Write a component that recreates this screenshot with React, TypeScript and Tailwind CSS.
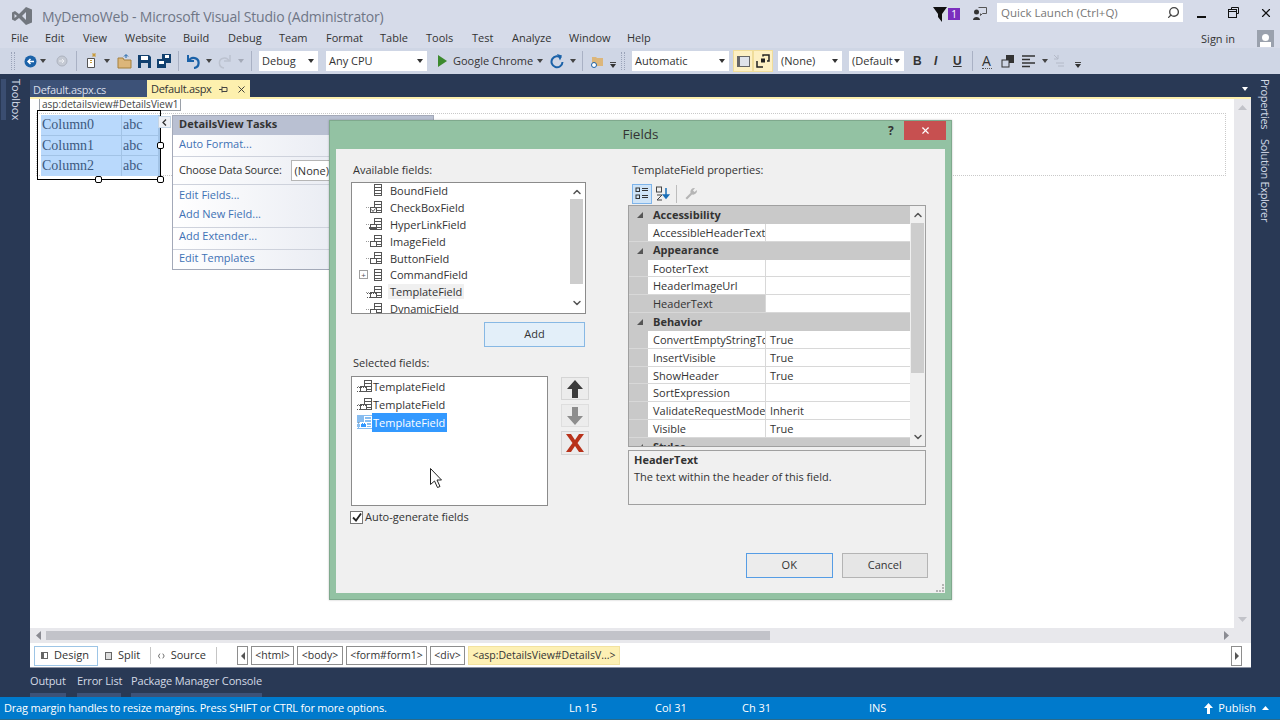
import { ChevronUp, ChevronDown, X, Search } from "lucide-react";

const menus = [
  ["File", "w-[34px]"],
  ["Edit", "w-[38px]"],
  ["View", "w-[42px]"],
  ["Website", "w-[58px]"],
  ["Build", "w-[45px]"],
  ["Debug", "w-[51px]"],
  ["Team", "w-[47px]"],
  ["Format", "w-[54px]"],
  ["Table", "w-[46px]"],
  ["Tools", "w-[46px]"],
  ["Test", "w-[40px]"],
  ["Analyze", "w-[57px]"],
  ["Window", "w-[58px]"],
  ["Help", "w-[30px]"],
];

const available = [
  ["BoundField", "plain", false],
  ["CheckBoxField", "check", false],
  ["HyperLinkField", "link", false],
  ["ImageField", "image", false],
  ["ButtonField", "button", false],
  ["CommandField", "plain", true],
  ["TemplateField", "template", false],
  ["DynamicField", "image", false],
] as const;

const props: { name: string; value?: string; group?: boolean; active?: boolean }[] = [
  { name: "Accessibility", group: true },
  { name: "AccessibleHeaderText" },
  { name: "Appearance", group: true },
  { name: "FooterText" },
  { name: "HeaderImageUrl" },
  { name: "HeaderText", active: true },
  { name: "Behavior", group: true },
  { name: "ConvertEmptyStringTc", value: "True" },
  { name: "InsertVisible", value: "True" },
  { name: "ShowHeader", value: "True" },
  { name: "SortExpression" },
  { name: "ValidateRequestMode", value: "Inherit" },
  { name: "Visible", value: "True" },
  { name: "Styles", group: true },
];

function Caret({ className = "text-[#333]" }: { className?: string }) {
  return (
    <svg width="6" height="4" viewBox="0 0 6 4" className={`shrink-0 ${className}`}>
      <path d="M0 0h6L3 4z" fill="currentColor" />
    </svg>
  );
}

function Combo({ label, width }: { label: string; width: string }) {
  return (
    <div className={`h-[20px] bg-white flex items-center justify-between pl-[3px] pr-[4px] text-[11px] text-[#333] shrink-0 whitespace-nowrap ${width}`}>
      <span>{label}</span>
      <Caret />
    </div>
  );
}

function Sep({ ml }: { ml: string }) {
  return <div className={`w-px h-[20px] bg-[#a9b1c4] shrink-0 ${ml}`} />;
}

function Grip({ ml }: { ml: string }) {
  return <div className={`w-[4px] h-[18px] border-x border-dotted border-[#9aa3b8] shrink-0 ${ml}`} />;
}

function Overflow({ ml }: { ml: string }) {
  return (
    <div className={`flex flex-col items-center gap-[1px] mt-[8px] shrink-0 ${ml}`}>
      <div className="w-[6px] h-px bg-[#444]" />
      <Caret />
    </div>
  );
}

function FieldIcon({ kind, light = false }: { kind: string; light?: boolean }) {
  const c = light ? "#ffffff" : "#555";
  return (
    <svg width="20" height="14" viewBox="0 0 20 14" className="shrink-0" fill="none" stroke={c}>
      <rect x="8.5" y="1.5" width="7" height="11" />
      <path d="M8.5 4.5h7M8.5 7.5h7M8.5 10.5h7" />
      {kind !== "plain" && <rect x="4.5" y="7.5" width="6" height="5" fill={light ? "#3399ff" : "#fff"} />}
      {kind === "link" && <path d="M3 11h8" strokeWidth="2" />}
      {kind === "check" && <path d="M5.500 9.500l1.500 2 2.500-3" />}
      {kind === "template" && <path d="M1 8.5h9M1 12.5h9" strokeDasharray="1 1" />}
      {kind !== "plain" && <path d="M0 7.5h4" strokeDasharray="1 1" stroke="#999" />}
    </svg>
  );
}

function Handle({ className }: { className: string }) {
  return <div className={`absolute w-[7px] h-[7px] rounded-[2px] bg-white border border-black ${className}`} />;
}

function Crumb({ label, width, active = false }: { label: string; width: string; active?: boolean }) {
  return (
    <div
      className={`h-[19px] flex items-center justify-center text-[10.500px] text-[#333] shrink-0 border whitespace-nowrap ${width} ${
        active ? "bg-[#fdf0b4] border-[#f2e2a0]" : "bg-white border-[#8e8e8e]"
      }`}
    >
      {label}
    </div>
  );
}

function FieldsDialog() {
  return (
    <div className="absolute left-[329px] top-[120px] w-[623px] h-[480px] bg-[#93c2a3] border border-[#7fa98d] flex flex-col text-[#333] shadow-[0_0_2px_rgba(0,0,0,0.25)]">
      <div className="h-[28px] pb-[2px] relative flex items-center justify-center text-[13.500px] shrink-0">
        <span>Fields</span>
        <span className="absolute left-[558px] top-[1px] text-[12px] font-bold">?</span>
        <div className="absolute left-[574px] top-0 w-[42px] h-[19px] bg-[#c75050] flex items-center justify-center">
          <X size={11} strokeWidth={2.500} className="text-white" />
        </div>
      </div>
      <div className="mx-[6px] mb-[6px] flex-1 bg-[#f0f0f0] relative flex pl-[15px] pt-[14px] text-[11px]">
        {/* left column */}
        <div className="w-[279px] shrink-0">
          <div className="h-[16px] pl-[2px] leading-[14px]">Available fields:</div>
          <div className="mt-[3px] w-[235px] h-[132px] bg-white border border-[#8b8b8b] flex overflow-hidden">
            <div className="flex-1 overflow-hidden -mt-[1px]">
              {available.map(([name, kind, plus]) => (
                <div key={name} className="h-[16.9px] flex items-center">
                  <div className="w-[7px] ml-[7px] shrink-0">
                    {plus && (
                      <div className="w-[9px] h-[9px] border border-[#a0a0a0] text-[8px] leading-[7px] text-center text-[#555]">+</div>
                    )}
                  </div>
                  <FieldIcon kind={kind} />
                  <span className={`ml-[2px] px-[2px] leading-[15px] ${kind === "template" ? "bg-[#f0f0f0]" : ""}`}>{name}</span>
                </div>
              ))}
            </div>
            <div className="w-[13px] mr-[2px] shrink-0 flex flex-col items-center">
              <ChevronUp size={12} strokeWidth={3} className="text-[#555] mt-[2px] h-[14px]" />
              <div className="w-full h-[85px] bg-[#cdcdcd]" />
              <ChevronDown size={12} strokeWidth={3} className="text-[#555] mt-[13px]" />
            </div>
          </div>
          <div className="mt-[8px] ml-[133px] w-[101px] h-[25px] bg-[#e3eff9] border border-[#87b8e4] flex items-center justify-center">
            Add
          </div>
          <div className="mt-[9px] h-[16px] pl-[2px] leading-[14px]">Selected fields:</div>
          <div className="mt-[4px] flex">
            <div className="w-[197px] h-[130px] bg-white border border-[#8b8b8b] pl-[5px]">
              {["a", "b", "c"].map((k) => (
                <div key={k} className="h-[18px] flex items-center">
                  <div className={`w-[15px] overflow-hidden shrink-0 ${k === "c" ? "bg-[#88bdf0]" : ""}`}>
                    <div className="-ml-[1px]">
                      <FieldIcon kind="template" light={k === "c"} />
                    </div>
                  </div>
                  <span className={`leading-[19px] pl-[1px] pr-[2px] ${k === "c" ? "bg-[#3399ff] text-white" : ""}`}>TemplateField</span>
                </div>
              ))}
            </div>
            <div className="ml-[13px] flex flex-col mt-[1px]">
              <div className="w-[28px] h-[23px] bg-[#ececec] border border-[#d5d5d5] flex items-center justify-center">
                <svg width="16" height="18" viewBox="0 0 16 18"><path d="M8 0L16 9h-5v9H5V9H0z" fill="#3c3c3c" /></svg>
              </div>
              <div className="mt-[4px] w-[28px] h-[23px] bg-[#ececec] border border-[#dedede] flex items-center justify-center">
                <svg width="16" height="18" viewBox="0 0 16 18"><path d="M8 18L0 9h5V0h6v9h5z" fill="#8d8d8d" /></svg>
              </div>
              <div className="mt-[4px] w-[28px] h-[24px] bg-[#ececec] border border-[#d5d5d5] flex items-center justify-center">
                <svg width="22" height="20" viewBox="0 0 22 20"><path d="M2 1h5l4 6 4-6h5l-6.500 9L20 19h-5l-4-6-4 6H2l6.500-9z" fill="#b8321a" /></svg>
              </div>
            </div>
          </div>
          <div className="mt-[3px] -ml-[1px] flex items-center">
            <div className="w-[13px] h-[13px] bg-white border border-[#777] flex items-center justify-center">
              <svg width="10" height="9" viewBox="0 0 10 9"><path d="M1 4.500l3 3 5-7" fill="none" stroke="#222" strokeWidth="1.800" /></svg>
            </div>
            <span className="ml-[2px]">Auto-generate fields</span>
          </div>
        </div>
        {/* right column */}
        <div className="w-[298px] shrink-0">
          <div className="h-[16px] pl-[2px] leading-[14px]">TemplateField properties:</div>
          <div className="h-[21px] mt-[4px] pl-[2px] flex items-center">
            <div className="w-[20px] h-[20px] bg-[#cfe4f7] border border-[#7eb4ea] flex items-center justify-center">
              <svg width="14" height="13" viewBox="0 0 14 13" fill="none" stroke="#333">
                <rect x="1" y="1" width="3.500" height="3.500" />
                <rect x="1" y="8" width="3.500" height="3.500" />
                <path d="M7 1.500h6M7 3.500h6M7 8.500h6M7 10.500h6" />
              </svg>
            </div>
            <svg width="16" height="15" viewBox="0 0 16 15" className="ml-[3px]" fill="none">
              <rect x="1.500" y="1" width="5" height="5" stroke="#444" />
              <path d="M2 9h5L2 14h5" stroke="#444" />
              <path d="M11 2v9M8.500 9l2.500 3 2.500-3z" stroke="#1a6fb8" strokeWidth="1.500" />
            </svg>
            <div className="ml-[5px] w-px h-[18px] bg-[#bdbdbd]" />
            <svg width="14" height="14" viewBox="0 0 14 14" className="ml-[7px]">
              <path d="M13 3l-2.500 2L9 3.500 11 1a4 4 0 00-4.500 5L1.500 11l1.500 1.500L8 7.500A4 4 0 0013 3z" fill="#b5b5b5" />
            </svg>
          </div>
          <div className="mt-[1px] -ml-[2px] w-[298px] h-[242px] bg-white border border-[#a0a0a0] flex overflow-hidden">
            <div className="w-[281px] shrink-0">
              {props.map((p) =>
                p.group ? (
                  <div key={p.name} className="h-[17.85px] bg-[#c9c9c9] flex items-center font-bold">
                    <svg width="6" height="6" viewBox="0 0 6 6" className="ml-[8px]"><path d="M6 0v6H0z" fill="#555" /></svg>
                    <span className="ml-[10px]">{p.name}</span>
                  </div>
                ) : (
                  <div key={p.name} className="h-[17.85px] flex border-b border-[#d8d8d8]">
                    <div className="w-[19px] bg-[#c9c9c9] shrink-0" />
                    <div className={`w-[118px] shrink-0 pl-[5px] overflow-hidden whitespace-nowrap leading-[17px] border-r border-[#d8d8d8] ${p.active ? "bg-[#c9c9c9]" : ""}`}>
                      {p.name}
                    </div>
                    <div className="flex-1 pl-[4px] leading-[17px]">{p.value}</div>
                  </div>
                ),
              )}
            </div>
            <div className="flex-1 flex flex-col items-center bg-[#f0f0f0]">
              <ChevronUp size={12} strokeWidth={3} className="text-[#555] mt-[3px] h-[12px]" />
              <div className="w-[13px] mt-[2px] h-[150px] bg-[#cdcdcd]" />
              <ChevronDown size={12} strokeWidth={3} className="text-[#555] mt-[58px]" />
            </div>
          </div>
          <div className="mt-[3px] -ml-[2px] w-[298px] h-[55px] border border-[#a0a0a0] pl-[5px] pt-[1px]">
            <div className="font-bold leading-[16px]">HeaderText</div>
            <div className="mt-[1px] leading-[16px]">The text within the header of this field.</div>
          </div>
          <div className="mt-[48px] flex ml-[116px]">
            <div className="w-[88px] h-[25px] bg-[#ececec] border border-[#569de5] flex items-center justify-center">OK</div>
            <div className="ml-[9px] w-[88px] h-[25px] bg-[#e6e6e6] border border-[#b4b4b4] flex items-center justify-center">Cancel</div>
          </div>
        </div>
        <div className="absolute right-[1px] bottom-[1px] w-[8px] h-[8px] border-r-2 border-b-2 border-dotted border-[#b5b5b5]" />
      </div>
    </div>
  );
}

export default function App() {
  return (
    <div className="w-[1280px] h-[720px] relative overflow-hidden flex flex-col bg-[#d6dbe9] text-[#333] font-['Open_Sans','Liberation_Sans',sans-serif]">
      {/* title bar */}
      <div className="h-[28px] flex items-center shrink-0">
        <svg width="20" height="18" viewBox="0 0 20 18" className="ml-[12px] mt-[4px]">
          <path d="M14 0l6 2.500v13L14 18 7 11l-4 3-3-1.500v-7L3 4l4 3zM14 5L10 9l4 4zM2.500 7v4L5 9z" fill="#72777f" />
        </svg>
        <div className="ml-[10px] mt-[4px] text-[14px] tracking-[-0.2px] text-[#6f7686]">MyDemoWeb - Microsoft Visual Studio (Administrator)</div>
        <div className="ml-auto flex items-center">
          <svg width="14" height="15" viewBox="0 0 14 15"><path d="M0 0h14L9 7v8L5 10V7z" fill="#111" /></svg>
          <div className="ml-[1px] w-[12px] h-[12px] bg-[#7b2fbe] text-white text-[10px] leading-[12px] text-center">1</div>
          <svg width="16" height="16" viewBox="0 0 16 16" className="ml-[12px]">
            <circle cx="4.500" cy="6" r="2.500" fill="#333" />
            <path d="M1 14c0-4 7-4 7 0z" fill="#333" />
            <path d="M6.500 1.500h8v6h-4l-2 2v-2" fill="none" stroke="#555" />
          </svg>
          <div className="ml-[9px] mb-[3px] w-[186px] h-[19px] bg-white flex items-center justify-between pl-[4px] pr-[3px] text-[11.500px] text-[#777]">
            <span>Quick Launch (Ctrl+Q)</span>
            <Search size={13} strokeWidth={2.500} className="-scale-x-100 text-[#444]" />
          </div>
          <div className="ml-[14px] w-[9px] h-[2px] bg-[#111] mt-[6px]" />
          <svg width="11" height="11" viewBox="0 0 11 11" className="ml-[22px] mb-[3px]" fill="none" stroke="#111">
            <path d="M3.500 2.500v-2h7v6h-2" />
            <rect x="0.500" y="2.500" width="8" height="8" />
            <path d="M.5 4.500h8" />
          </svg>
          <X size={14} strokeWidth={2} className="ml-[20px] mr-[7px] mb-[3px] text-[#111]" />
        </div>
      </div>
      {/* menu */}
      <div className="h-[20px] flex items-center pl-[11px] text-[11px] text-[#333] shrink-0">
        {menus.map(([label, w]) => (
          <div key={label} className={`mt-[1px] ${w}`}>{label}</div>
        ))}
        <div className="ml-auto mt-[2px]">Sign in</div>
        <div className="ml-[22px] mr-[6px] w-[17px] h-[17px] bg-[#9aa1ad] flex flex-col items-center justify-end overflow-hidden">
          <div className="w-[7px] h-[7px] rounded-full bg-white mb-[1px]" />
          <div className="w-[11px] h-[5px] bg-white" />
        </div>
      </div>
      {/* toolbar */}
      <div className="h-[26px] flex items-center pl-[11px] shrink-0 bg-[#cfd6e5]">
        <Grip ml="ml-0" />
        <svg width="13" height="13" viewBox="0 0 13 13" className="ml-[9px]">
          <circle cx="6.500" cy="6.500" r="6" fill="#1b62a8" />
          <path d="M10 6.500H4M6.500 4L4 6.500 6.500 9" stroke="#fff" strokeWidth="1.500" fill="none" />
        </svg>
        <Caret className="text-[#444] ml-[3px]" />
        <svg width="12" height="12" viewBox="0 0 12 12" className="ml-[10px]">
          <circle cx="6" cy="6" r="5" fill="#c5cad4" stroke="#adb3bf" />
          <path d="M3 6h5M6 4l2 2-2 2" stroke="#eef0f4" fill="none" />
        </svg>
        <Sep ml="ml-[8px]" />
        <svg width="16" height="16" viewBox="0 0 16 16" className="ml-[6px]" fill="none">
          <path d="M4.500 5.500h7v9h-7z" fill="#fff" stroke="#555" />
          <path d="M7 7.500h2M7 9.500h2" stroke="#c89b3c" />
          <path d="M11 0v4M9 2h4M9.500 .5l3 3M12.500 .5l-3 3" stroke="#c89b3c" />
        </svg>
        <Caret className="text-[#444] ml-[5px]" />
        <svg width="15" height="15" viewBox="0 0 15 15" className="ml-[7px]">
          <path d="M1 4h5l1 2h7v8H1z" fill="#dcb67a" stroke="#a5803d" />
          <path d="M9 4V1M7 2.500L9 .5l2 2" stroke="#1b62a8" fill="none" />
        </svg>
        <svg width="13" height="13" viewBox="0 0 13 13" className="ml-[6px]">
          <path d="M0 0h11l2 2v11H0z" fill="#11406f" />
          <rect x="3" y="1" width="7" height="4" fill="#fff" />
          <rect x="3" y="8" width="7" height="5" fill="#c9d3e2" />
        </svg>
        <svg width="14" height="14" viewBox="0 0 14 14" className="ml-[6px]">
          <path d="M5 0h9v9H9v5H0V5h5z" fill="#11406f" />
          <rect x="8" y="1" width="4" height="3" fill="#fff" />
          <rect x="2" y="7" width="5" height="3" fill="#fff" />
        </svg>
        <Sep ml="ml-[7px]" />
        <svg width="14" height="15" viewBox="0 0 14 15" className="ml-[7px]" fill="none">
          <path d="M2 1v6h6" stroke="#1b62a8" strokeWidth="2" />
          <path d="M3 7a5 5 0 115 7" stroke="#1b62a8" strokeWidth="2.200" />
        </svg>
        <Caret className="text-[#444] ml-[6px]" />
        <svg width="14" height="15" viewBox="0 0 14 15" className="ml-[6px]" fill="none">
          <path d="M12 1v6H6" stroke="#bcc2cf" strokeWidth="1.500" />
          <path d="M11 7a5 5 0 10-5 7" stroke="#bcc2cf" strokeWidth="1.500" />
        </svg>
        <Caret className="text-[#a4aab8] ml-[6px]" />
        <Sep ml="ml-[7px]" />
        <Combo label="Debug" width="w-[59px] ml-[7px]" />
        <Combo label="Any CPU" width="w-[101px] ml-[8px]" />
        <svg width="9" height="12" viewBox="0 0 9 12" className="ml-[11px]"><path d="M0 0l9 6-9 6z" fill="#3c8a2e" /></svg>
        <div className="ml-[6px] w-[80px] text-[11px] whitespace-nowrap">Google Chrome</div>
        <Caret className="text-[#444] ml-[4px]" />
        <svg width="14" height="15" viewBox="0 0 14 15" className="ml-[7px]" fill="none">
          <path d="M11 4a5.500 5.500 0 10 1.500 4" stroke="#1b62a8" strokeWidth="2" />
          <path d="M7 0l5 1.500-2 5z" fill="#1b62a8" />
        </svg>
        <Caret className="text-[#444] ml-[6px]" />
        <Sep ml="ml-[6px]" />
        <svg width="15" height="15" viewBox="0 0 15 15" className="ml-[7px]">
          <path d="M2 3h4l1 1h6v8H2z" fill="#dcb67a" />
          <circle cx="4" cy="11" r="2.500" fill="#fff" stroke="#1b62a8" />
        </svg>
        <Overflow ml="ml-[5px]" />
        <Grip ml="ml-[5px]" />
        <Combo label="Automatic" width="w-[97px] ml-[7px]" />
        <div className="ml-[4px] w-[20px] h-[22px] bg-[#fdf0c3] border border-[#f0dd9a] flex items-center justify-center">
          <div className="w-[13px] h-[11px] border border-[#666] border-l-[3px] bg-[#e0e3ea]" />
        </div>
        <div className="w-[20px] h-[22px] bg-[#fdf0c3] border border-[#f0dd9a] flex items-center justify-center">
          <svg width="14" height="14" viewBox="0 0 14 14" fill="none" stroke="#222" strokeWidth="1.500">
            <path d="M7 2.500V1h6v6h-2" />
            <rect x="5" y="4.500" width="4" height="4" fill="#222" stroke="none" />
            <path d="M1 7v6h6" />
          </svg>
        </div>
        <Combo label="(None)" width="w-[64px] ml-[5px]" />
        <Combo label="(Default" width="w-[55px] ml-[7px]" />
        <div className="ml-[9px] w-[8px] text-[12px] font-bold text-[#333] font-['Liberation_Sans',sans-serif]">B</div>
        <div className="ml-[13px] w-[8px] text-[12px] font-bold italic text-[#333] font-['Liberation_Sans',sans-serif]">I</div>
        <div className="ml-[11px] w-[10px] text-[12px] font-bold underline text-[#333] font-['Liberation_Sans',sans-serif]">U</div>
        <Sep ml="ml-[9px]" />
        <div className="ml-[9px] w-[10px] text-[14px] leading-[14px] text-[#333] border-b border-dotted border-[#555]">A</div>
        <svg width="13" height="13" viewBox="0 0 13 13" className="ml-[9px]">
          <rect x="5" y="0" width="8" height="8" fill="#333" />
          <rect x="1" y="5" width="7" height="7" fill="#cfd6e5" stroke="#333" />
        </svg>
        <svg width="13" height="13" viewBox="0 0 13 13" className="ml-[8px]" stroke="#333" strokeWidth="1.500">
          <path d="M0 1h13M0 4.500h8M0 8h13M0 11.500h8" />
        </svg>
        <Caret className="text-[#444] ml-[7px]" />
        <svg width="12" height="14" viewBox="0 0 12 14" className="ml-[5px]" fill="none" stroke="#b4bac8">
          <path d="M1 1l4 4M1 5h4V1M3 9h8M5 12h6" />
        </svg>
        <Overflow ml="ml-[10px]" />
      </div>
      {/* main */}
      <div className="flex-1 min-h-0 flex bg-[#293955]">
        <div className="w-[30px] shrink-0 pt-[5px] flex">
          <div className="w-[5px] h-[41px] bg-[#3a4d70] ml-[1px]" />
          <div className="ml-[3px] text-[11px] text-[#d3d9e6] [writing-mode:vertical-rl] leading-[14px]">Toolbox</div>
        </div>
        <div className="w-[1221px] shrink-0 flex flex-col">
          <div className="h-[24px] shrink-0 pt-[6px] flex items-stretch text-[11px] tracking-[-0.3px]">
            <div className="w-[117px] bg-[#3d5278] text-[#d8deea] pl-[3px] leading-[19px]">Default.aspx.cs</div>
            <div className="w-[103px] bg-[#fdf0ae] text-[#333] pl-[4px] flex items-center">
              <span className="w-[68px]">Default.aspx</span>
              <svg width="9" height="9" viewBox="0 0 9 9" fill="none" stroke="#444"><path d="M0 4.500h3M3 1.500v6M3 2.500h5M3 6.500h5M8 2.500v4" /></svg>
              <X size={11} strokeWidth={2} className="ml-[8px]" />
            </div>
            <div className="ml-auto mr-[3px] flex items-center">
              <Caret className="text-white" />
            </div>
          </div>
          <div className="flex-1 min-h-0 bg-white border-t-2 border-[#fdf0ae] flex flex-col -mt-[1px]">
            <div className="flex-1 min-h-0 flex">
              <div className="flex-1 relative overflow-hidden">
                <div className="absolute left-[6px] top-[14px] w-[1190px] h-[63px] border border-dotted border-[#c9c9c9]" />
                <div className="absolute left-[9px] -top-[1px] w-[142px] h-[13px] bg-white border-x border-b border-[#9aa0a8] text-[10px] leading-[13px] pl-[2px] whitespace-nowrap text-[#444]">
                  asp:detailsview#DetailsView1
                </div>
                <div className="absolute left-[7px] top-[11px] w-[124px] h-[70px] border border-black pl-[3px] pt-[4px]">
                  <div className="grid grid-cols-[80px_36px] gap-[1px] bg-[#a2c3e6] font-['Liberation_Serif',serif] text-[14px] text-[#3d5a80]">
                    {["Column0", "Column1", "Column2"].map((c) => (
                      <div key={c} className="contents">
                        <div className="bg-[#b9d9fc] h-[19.500px] leading-[19px] pl-[1px]">{c}</div>
                        <div className="bg-[#b9d9fc] h-[19.500px] leading-[19px] pl-[1px]">abc</div>
                      </div>
                    ))}
                  </div>
                </div>
                <Handle className="left-[127px] top-[43px]" />
                <Handle className="left-[65px] top-[77px]" />
                <Handle className="left-[127px] top-[77px]" />
                <div className="absolute left-[128px] top-[17px] w-[13px] h-[12px] bg-[#eef0f5] border border-[#c5d5e5] flex items-center justify-center">
                  <svg width="5" height="7" viewBox="0 0 5 7" fill="none" stroke="#333" strokeWidth="1.300"><path d="M4 .5L1 3.500l3 3" /></svg>
                </div>
                <div className="absolute left-[142px] top-[16px] w-[262px] h-[155px] border border-[#a3a9b8] bg-gradient-to-r from-white to-[#dde1ec] text-[11px]">
                  <div className="h-[19px] bg-[#b9c0d2] pl-[6px] leading-[15px] font-bold text-[#333]">DetailsView Tasks</div>
                  <div className="h-[22px] pl-[6px] leading-[18px] text-[#3f72b5] border-b border-[#ced2dc]">Auto Format...</div>
                  <div className="h-[28px] pl-[6px] flex items-center border-b border-[#ced2dc]">
                    <span className="tracking-[-0.2px]">Choose Data Source:</span>
                    <div className="ml-[9px] w-[120px] h-[21px] bg-white border border-[#b5b5b5] pl-[3px] leading-[19px]">(None)</div>
                  </div>
                  <div className="h-[21px] pl-[6px] leading-[17px] text-[#3f72b5] mt-[1px]">Edit Fields...</div>
                  <div className="h-[21px] pl-[6px] leading-[14px] text-[#3f72b5] border-b border-[#ced2dc]">Add New Field...</div>
                  <div className="h-[22px] pl-[6px] leading-[16px] text-[#3f72b5] border-b border-[#ced2dc]">Add Extender...</div>
                  <div className="h-[21px] pl-[6px] leading-[16px] text-[#3f72b5]">Edit Templates</div>
                </div>
              </div>
              <div className="w-[17px] shrink-0 bg-[#e8e8ec] flex flex-col items-center justify-between py-[6px]">
                <svg width="9" height="5" viewBox="0 0 9 5"><path d="M4.500 0L9 5H0z" fill="#c2c3c9" /></svg>
                <svg width="9" height="5" viewBox="0 0 9 5"><path d="M4.500 5L9 0H0z" fill="#c2c3c9" /></svg>
              </div>
            </div>
            <div className="h-[15px] shrink-0 bg-[#e8e8ec] flex items-center pl-[6px] pr-[22px]">
              <svg width="5" height="9" viewBox="0 0 5 9"><path d="M0 4.500L5 0v9z" fill="#8a8b92" /></svg>
              <div className="ml-[5px] w-[724px] h-[9px] bg-[#c2c3c9]" />
              <svg width="5" height="9" viewBox="0 0 5 9" className="ml-auto"><path d="M5 4.500L0 0v9z" fill="#8a8b92" /></svg>
            </div>
            <div className="h-[25px] pt-[1px] shrink-0 flex items-center pl-[4px] text-[11px] border-b border-[#8c93a3]">
              <div className="w-[64px] h-[20px] border border-[#9dc5e6] flex items-center pl-[6px]">
                <div className="w-[7px] h-[7px] border border-[#666] border-l-[3px]" />
                <span className="ml-[6px]">Design</span>
              </div>
              <div className="ml-[7px] w-[36px] flex items-center">
                <div className="w-[7px] h-[8px] border border-[#666] bg-[#ddd]" />
                <span className="ml-[6px]">Split</span>
              </div>
              <div className="ml-[9px] w-px h-[17px] bg-[#c5c5c5]" />
              <div className="ml-[7px] w-[48px] flex items-center">
                <svg width="7" height="6" viewBox="0 0 7 6" fill="none" stroke="#666"><path d="M2 .5L.5 3 2 5.500M5 .5L6.500 3 5 5.500" /></svg>
                <span className="ml-[6px]">Source</span>
              </div>
              <div className="ml-[10px] w-px h-[17px] bg-[#c5c5c5]" />
              <div className="ml-[20px] w-[11px] h-[19px] border border-[#8e8e8e] flex items-center justify-center">
                <svg width="4" height="8" viewBox="0 0 4 8"><path d="M0 4l4-4v8z" fill="#555" /></svg>
              </div>
              <div className="ml-[3px] flex gap-[3px]">
                <Crumb label="<html>" width="w-[43px]" />
                <Crumb label="<body>" width="w-[46px]" />
                <Crumb label="<form#form1>" width="w-[81px]" />
                <Crumb label="<div>" width="w-[35px]" />
                <Crumb label="<asp:DetailsView#DetailsV...>" width="w-[152px]" active />
              </div>
              <div className="ml-auto mr-[9px] w-[11px] h-[20px] border border-[#8e8e8e] flex items-center justify-center">
                <svg width="4" height="8" viewBox="0 0 4 8"><path d="M4 4L0 0v8z" fill="#555" /></svg>
              </div>
            </div>
          </div>
          <div className="h-[29px] shrink-0 flex pt-[5px] text-[11px] tracking-[-0.15px] text-[#d3d9e6]">
            <div className="w-[36px] h-full border-b-[4px] border-[#3d5278] mr-[11px]">Output</div>
            <div className="w-[44px] h-full border-b-[4px] border-[#3d5278] mr-[10px] whitespace-nowrap">Error List</div>
            <div className="w-[131px] h-full border-b-[4px] border-[#3d5278] whitespace-nowrap">Package Manager Console</div>
          </div>
        </div>
        <div className="flex-1 pt-[5px] pl-[7px]">
          <div className="text-[11px] tracking-[-0.3px] text-[#d3d9e6] [writing-mode:vertical-rl] leading-[14px]">
            Properties
            <span className="mt-[10px] inline-block">Solution Explorer</span>
          </div>
        </div>
      </div>
      {/* status */}
      <div className="h-[23px] shrink-0 bg-[#007acc] text-white flex items-center text-[11px] border-b border-[#2a6a8a]">
        <div className="w-[569px] pl-[4px] whitespace-nowrap tracking-[-0.2px]">Drag margin handles to resize margins. Press SHIFT or CTRL for more options.</div>
        <div className="w-[86px]">Ln 15</div>
        <div className="w-[87px]">Col 31</div>
        <div className="w-[127px]">Ch 31</div>
        <div>INS</div>
        <div className="ml-auto flex items-center mr-[11px]">
          <svg width="9" height="11" viewBox="0 0 9 11" className="mr-[5px]"><path d="M4.500 0L9 5H6v6H3V5H0z" fill="#fff" /></svg>
          <span>Publish</span>
          <svg width="7" height="4" viewBox="0 0 7 4" className="ml-[6px]"><path d="M3.500 0L7 4H0z" fill="#fff" /></svg>
        </div>
      </div>
      <FieldsDialog />
      {/* mouse pointer */}
      <svg width="12" height="20" viewBox="0 0 12 20" className="absolute left-[430px] top-[468px]">
        <path d="M.5.5v16l4-3.500 3 6.500 2.500-1-3-6.500h4.500z" fill="#fff" stroke="#222" />
      </svg>
    </div>
  );
}
